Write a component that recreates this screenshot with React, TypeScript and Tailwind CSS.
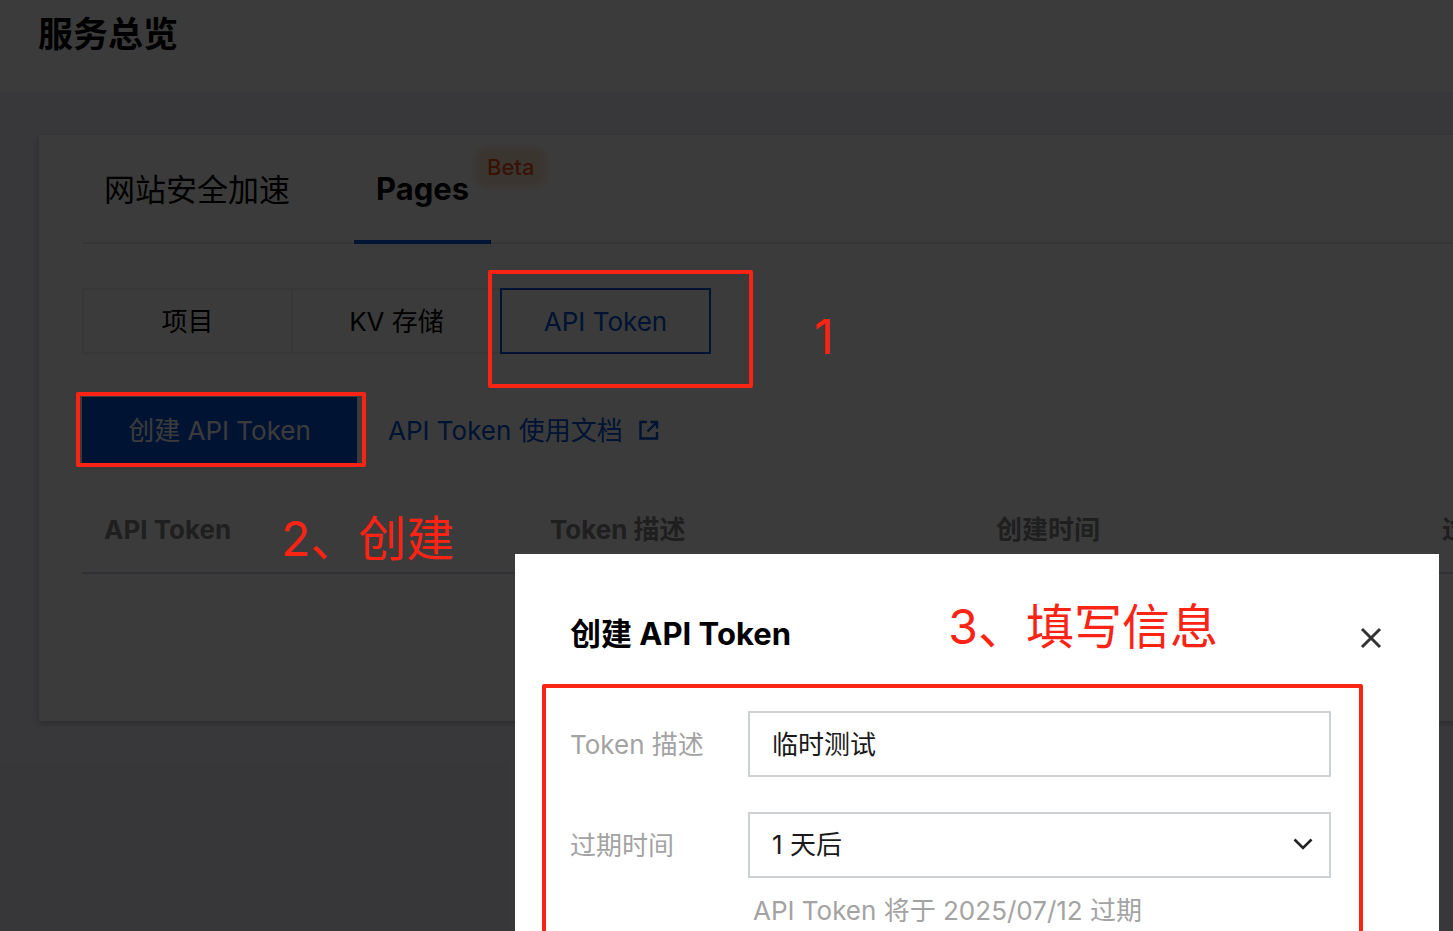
import { useState } from 'react';

const columns = ['API Token', 'Token 描述', '创建时间', '过期时间'];

function ExternalIcon() {
  return (
    <svg
      className="ml-4 h-5 w-5"
      viewBox="0 0 20 20"
      fill="none"
      stroke="currentColor"
      strokeWidth="2.4"
      aria-hidden="true"
    >
      <path d="M8 2H1.5v16.5H18V12" />
      <path d="M11.5 2H18v6.5M18 2l-9.5 9.5" />
    </svg>
  );
}

function Overview() {
  const [segment, setSegment] = useState('API Token');

  return (
    <div className="h-full bg-[#f0f0f9] text-black">
      <header className="flex h-[92px] items-start bg-white px-[38px] pt-2">
        <h1 className="text-[35px] leading-[52px] font-bold">服务总览</h1>
      </header>

      <main className="pt-[43px] pl-[39px]">
        <section className="h-[586px] w-max min-w-full bg-white pl-[43px] shadow-[0_2px_6px_rgba(54,58,80,0.32)]">
          {/* タブ */}
          <div role="tablist" className="flex h-[109px] gap-[42px] border-b-2 border-[#e7eaef]">
            <button role="tab" aria-selected="false" className="px-[22px] pt-1 text-[31px]">
              网站安全加速
            </button>
            <button
              role="tab"
              aria-selected="true"
              className="relative -mb-[2px] border-b-4 border-[#0052d9] px-[22px] pt-1 text-[31px] font-bold"
            >
              Pages
              <span className="absolute top-4 left-[125px] rounded-lg bg-[#ffe4d0] px-2 text-[22px] leading-8 font-medium text-[#f04a1e] shadow-[0_0_6px_4px_#ffe4d0]">
                Beta
              </span>
            </button>
          </div>

          {/* サブメニュー */}
          <div className="mt-11 flex text-[26px]">
            {['项目', 'KV 存储', 'API Token'].map((name) => (
              <button
                key={name}
                onClick={() => setSegment(name)}
                className={
                  segment === name
                    ? 'relative -mr-[2px] h-[66px] w-[211px] border-2 border-[#0052d9] text-[#0052d9]'
                    : '-mr-[2px] h-[66px] w-[211px] border-2 border-[#eceef2]'
                }
              >
                {name}
              </button>
            ))}
          </div>

          <div className="mt-[43px] flex items-center gap-[31px] text-[26px]">
            <button className="h-[66px] w-[275px] bg-[#0052d9] text-white">创建 API Token</button>
            <a href="#" className="flex items-center text-[#0052d9]">
              API Token 使用文档
              <ExternalIcon />
            </a>
          </div>

          <table className="mt-6 w-[1784px] table-fixed text-left text-[26px]">
            <thead>
              <tr className="h-[86px] border-b-2 border-[#cfd5de] text-[#888888]">
                {columns.map((name) => (
                  <th key={name} className="px-[22px] font-bold">
                    {name}
                  </th>
                ))}
              </tr>
            </thead>
          </table>
        </section>
      </main>
    </div>
  );
}

function CreateDialog() {
  const [desc, setDesc] = useState('临时测试');

  return (
    <div
      role="dialog"
      aria-labelledby="dialog-title"
      className="absolute top-[554px] right-[14px] bottom-0 w-[924px] bg-white pt-[56px] pr-[56px] pl-[55px]"
    >
      <div className="flex h-12 items-center justify-between">
        <h2 id="dialog-title" className="text-[31px] font-bold text-black">
          创建 API Token
        </h2>
        <button aria-label="关闭" className="pt-2 text-[#333333]">
          <svg className="h-6 w-6" viewBox="0 0 24 24" fill="none" stroke="currentColor" strokeWidth="3">
            <path d="M3 3l18 18M21 3L3 21" />
          </svg>
        </button>
      </div>

      <form className="mt-[53px] grid grid-cols-[178px_1fr] items-center gap-y-[35px] pr-[52px] text-[26px] text-[#a3a3a3]">
        <label htmlFor="desc">Token 描述</label>
        <input
          id="desc"
          value={desc}
          onChange={(e) => setDesc(e.target.value)}
          className="h-[66px] w-full border-2 border-[#cfd2d5] px-[22px] pb-1 text-[#1a1a1a]"
        />

        <label htmlFor="expire">过期时间</label>
        <div className="relative">
          <select
            id="expire"
            className="h-[66px] w-full appearance-none border-2 border-[#cfd2d5] bg-white px-[22px] pb-[2px] text-[#1a1a1a]"
          >
            <option>1 天后</option>
          </select>
          <svg
            className="pointer-events-none absolute top-[22px] right-[18px] h-5 w-5 text-[#222222]"
            viewBox="0 0 20 20"
            fill="none"
            stroke="currentColor"
            strokeWidth="2.6"
            aria-hidden="true"
          >
            <path d="M1.5 5.5l8.5 8.5 8.5-8.5" />
          </svg>
        </div>

        <p className="col-start-2 -mt-[22px] pl-[5px]">API Token 将于 2025/07/12 过期</p>
      </form>
    </div>
  );
}

// 手順の赤枠と番号
function Notes() {
  return (
    <div className="pointer-events-none absolute inset-0 text-5xl leading-[60px] text-[#fb2314]">
      <div className="absolute top-[270px] left-[488px] h-[118px] w-[265px] rounded-xs border-4 border-[#fb2314]" />
      <div className="absolute top-[392px] left-[76px] h-[75px] w-[290px] rounded-xs border-4 border-[#fb2314]" />
      <div className="absolute top-[684px] right-[90px] -bottom-2 w-[821px] rounded-xs border-4 border-[#fb2314]" />
      <span className="absolute top-[307px] left-[814px]">1</span>
      <span className="absolute top-[509px] left-[281px]">2、创建</span>
      <span className="absolute top-[597px] right-[235px]">3、填写信息</span>
    </div>
  );
}

export default function App() {
  return (
    <div className="relative h-screen overflow-hidden font-[Inter,'Noto_Sans_CJK_SC',sans-serif]">
      <Overview />
      <div className="absolute inset-0 bg-black/77" />
      <CreateDialog />
      <Notes />
    </div>
  );
}
